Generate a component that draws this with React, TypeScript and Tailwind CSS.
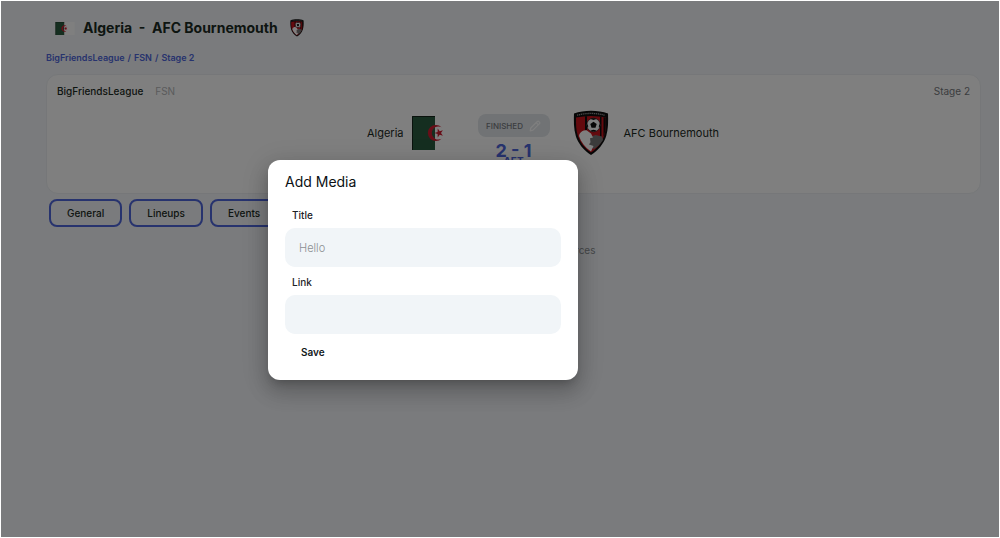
import { useState } from 'react'
import { clsx } from 'clsx'

const TABS = ['General', 'Lineups', 'Events', 'Media']

function AlgeriaFlag({ className }: { className?: string }) {
  return (
    <svg viewBox="0 0 50 34" className={className} aria-hidden="true">
      <rect width="50" height="34" fill="#fff" />
      <rect width="23" height="34" fill="#2b5c40" />
      <path d="M.5 34V.5H23" fill="none" stroke="#14241b" />
      <path
        d="M29.6 11.2A8.1 8.1 0 1 0 29.6 22.8A6.6 6.6 0 1 1 29.6 11.2Z"
        fill="#d01c30"
      />
      <path
        d="M22.4 17l3.2-1.1.1-3.4 2 2.7 3.2-1-1.9 2.8 1.9 2.8-3.2-1-2 2.7-.1-3.4z"
        fill="#d01c30"
      />
    </svg>
  )
}

function BournemouthCrest({ className }: { className?: string }) {
  return (
    <svg viewBox="0 0 36 46" className={className} aria-hidden="true">
      <path
        d="M1 3.6C6 1.6 12 .8 18 .8s12 .8 17 2.8c.3 8 .3 15-1.8 22.4C31 33.5 25 40.5 18 45 11 40.5 5 33.5 2.8 26 .7 18.6.7 11.6 1 3.6Z"
        fill="#0f0f0f"
      />
      <path d="M3 7.6C13 5.4 23 5.4 33 7.6 33 15 33 20.5 31.2 25.5 29 32.5 24 38.5 18 42.5 12 38.5 7 32.5 4.8 25.5 3 20.5 3 15 3 7.6Z" fill="#c8141d" />
      <path d="M12 6.2h2v14h-2zM27 6.7l1.500.2v21l-1.500 2zM30.500 7.200l2.300.4c.1 7 0 13-1.700 18l-.6 1.200z" fill="#0f0f0f" />
      <path d="M4 5.2Q18 1.7 32 5.2" fill="none" stroke="#999" strokeWidth="1.3" strokeDasharray="1.2 .7" />
      <path d="M17 27l5.500-2 6.500 1.500 1 3.500c-2.500 4-5.500 7-9 9l-5-3z" fill="#777" />
      <path
        d="M6.500 24c1.500-2.500 4-4 7-3.700l4.500 3.200 2 4-3 .8.500 4-1.500 2.200 4.500 1.500-2.500 5.500C12 37.500 8 32 6 26z"
        fill="#fff"
      />
      <circle cx="20.500" cy="15" r="6.800" fill="#fff" stroke="#0f0f0f" strokeWidth=".6" />
      <path
        d="M20.500 11.800l3.200 2.300-1.200 3.700h-4l-1.200-3.700zM17.500 8.900l3 1 3-1-1.500-.7h-3zM14 13.500l1.200 2.600-.2 2.200-1-2zM27 13.500l-1.200 2.600.2 2.200 1-2zM17.500 20.600l3-.8 3 .8-1.500 1h-3z"
        fill="#0f0f0f"
      />
    </svg>
  )
}

function PencilIcon() {
  return (
    <svg viewBox="0 0 12 12" className="size-3" fill="none" stroke="#fff" strokeWidth="1.2" strokeLinejoin="round">
      <path d="M1.200 10.800l.6-2.800L8.300 1.500a1.100 1.100 0 0 1 1.600 0l.6.6a1.100 1.100 0 0 1 0 1.600L4 10.200zM7.200 2.600l2.200 2.200" />
    </svg>
  )
}

function Field({ id, label, placeholder }: { id: string; label: string; placeholder?: string }) {
  const [value, setValue] = useState('')

  return (
    <div>
      <label htmlFor={id} className="block pl-[7px] pb-[3px] text-[10px] leading-5 font-medium text-[#1c2226]">
        {label}
      </label>
      <input
        id={id}
        value={value}
        placeholder={placeholder}
        onChange={e => setValue(e.target.value)}
        className="block w-full h-[39px] px-[14px] rounded-[10px] bg-[#f1f5f8] text-[11px] font-light placeholder:text-[#8c8f92] outline-none"
      />
    </div>
  )
}

function AddMediaDialog() {
  return (
    <div className="absolute inset-0 flex items-center justify-center pt-[2px] pr-[154px] bg-black/50">
      <form
        role="dialog"
        aria-labelledby="dialog-title"
        onSubmit={e => e.preventDefault()}
        className="w-[310px] px-[17px] pt-3 pb-[18px] rounded-xl bg-white shadow-[0_6px_8px_-4px_rgba(0,0,0,0.2),0_12px_20px_2px_rgba(0,0,0,0.14),0_5px_24px_4px_rgba(0,0,0,0.12)]"
      >
        <h2 id="dialog-title" className="mb-[13px] text-[14px] leading-5 text-[#0c1114]">Add Media</h2>
        <div className="flex flex-col gap-[5px]">
          <Field id="title" label="Title" placeholder="Hello" />
          <Field id="link" label="Link" />
        </div>
        <button className="mt-2 px-4 text-[10px] leading-5 font-semibold text-[#12181b]">Save</button>
      </form>
    </div>
  )
}

export default function App() {
  const [tab, setTab] = useState('Media')

  return (
    <div className="relative min-h-screen p-px bg-white font-['Inter',sans-serif] text-[#1b2a23]">
      <div className="relative min-h-[calc(100vh-2px)] pl-[45px] pr-[18px] bg-[#f4f7fa]">
        <header className="flex items-center pt-[17px] pl-[9px]">
          <AlgeriaFlag className="w-5 h-[13px]" />
          <h1 className="ml-2 text-[14px] leading-5 font-bold whitespace-pre">Algeria  -  AFC Bournemouth</h1>
          <BournemouthCrest className="ml-3 w-[14px] h-[18px]" />
        </header>

        <nav className="flex gap-[3px] mt-[10px] text-[9px] leading-5 font-semibold text-[#4f66dc]">
          <a href="#league">BigFriendsLeague</a>
          <span>/</span>
          <a href="#group">FSN</a>
          <span>/</span>
          <a href="#stage">Stage 2</a>
        </nav>

        <section className="mt-[6px] h-[120px] px-[10px] pt-[6px] rounded-xl border border-[#eceff3] bg-white">
          <div className="flex items-center text-[10px] leading-5">
            <span className="font-medium">BigFriendsLeague</span>
            <span className="ml-3 text-[#b4b6b8]">FSN</span>
            <span className="ml-auto text-[#777a80]">Stage 2</span>
          </div>

          <div className="grid grid-cols-[1fr_72px_1fr] items-start gap-x-4 pt-[9px] text-[11px] leading-5">
            <div className="flex items-center justify-end gap-2 h-[46px]">
              <span>Algeria</span>
              <AlgeriaFlag className="w-[50px] h-[34px]" />
            </div>
            <div className="flex flex-col items-center pt-1">
              <button className="flex items-center justify-center gap-[6px] w-full h-[23px] rounded-lg bg-[#e2e6ea] text-[8px] font-medium text-[#777b81]">
                FINISHED
                <PencilIcon />
              </button>
              <strong className="mt-1 text-[18px] leading-5 font-bold text-[#4f66dc]">2 - 1</strong>
              <span className="-mt-2 text-[10px] leading-4 font-bold text-[#4f66dc]">AET</span>
            </div>
            <div className="flex items-center gap-2 h-[46px]">
              <span className="flex justify-center w-[50px]">
                <BournemouthCrest className="w-9 h-[46px]" />
              </span>
              <span>AFC Bournemouth</span>
            </div>
          </div>
        </section>

        <div className="flex gap-[7px] mt-[5px] pl-[3px]">
          {TABS.map(t => (
            <button
              key={t}
              onClick={() => setTab(t)}
              className={clsx(
                'px-4 h-7 rounded-lg border-2 border-[#4f66dc] text-[10px]',
                t === tab ? 'font-semibold' : 'font-medium'
              )}
            >
              {t}
            </button>
          ))}
        </div>

        <p className="mt-[13px] text-center text-[10px] leading-5 text-[#8c8f93]">There are no available link sources</p>

        <AddMediaDialog />
      </div>
    </div>
  )
}
